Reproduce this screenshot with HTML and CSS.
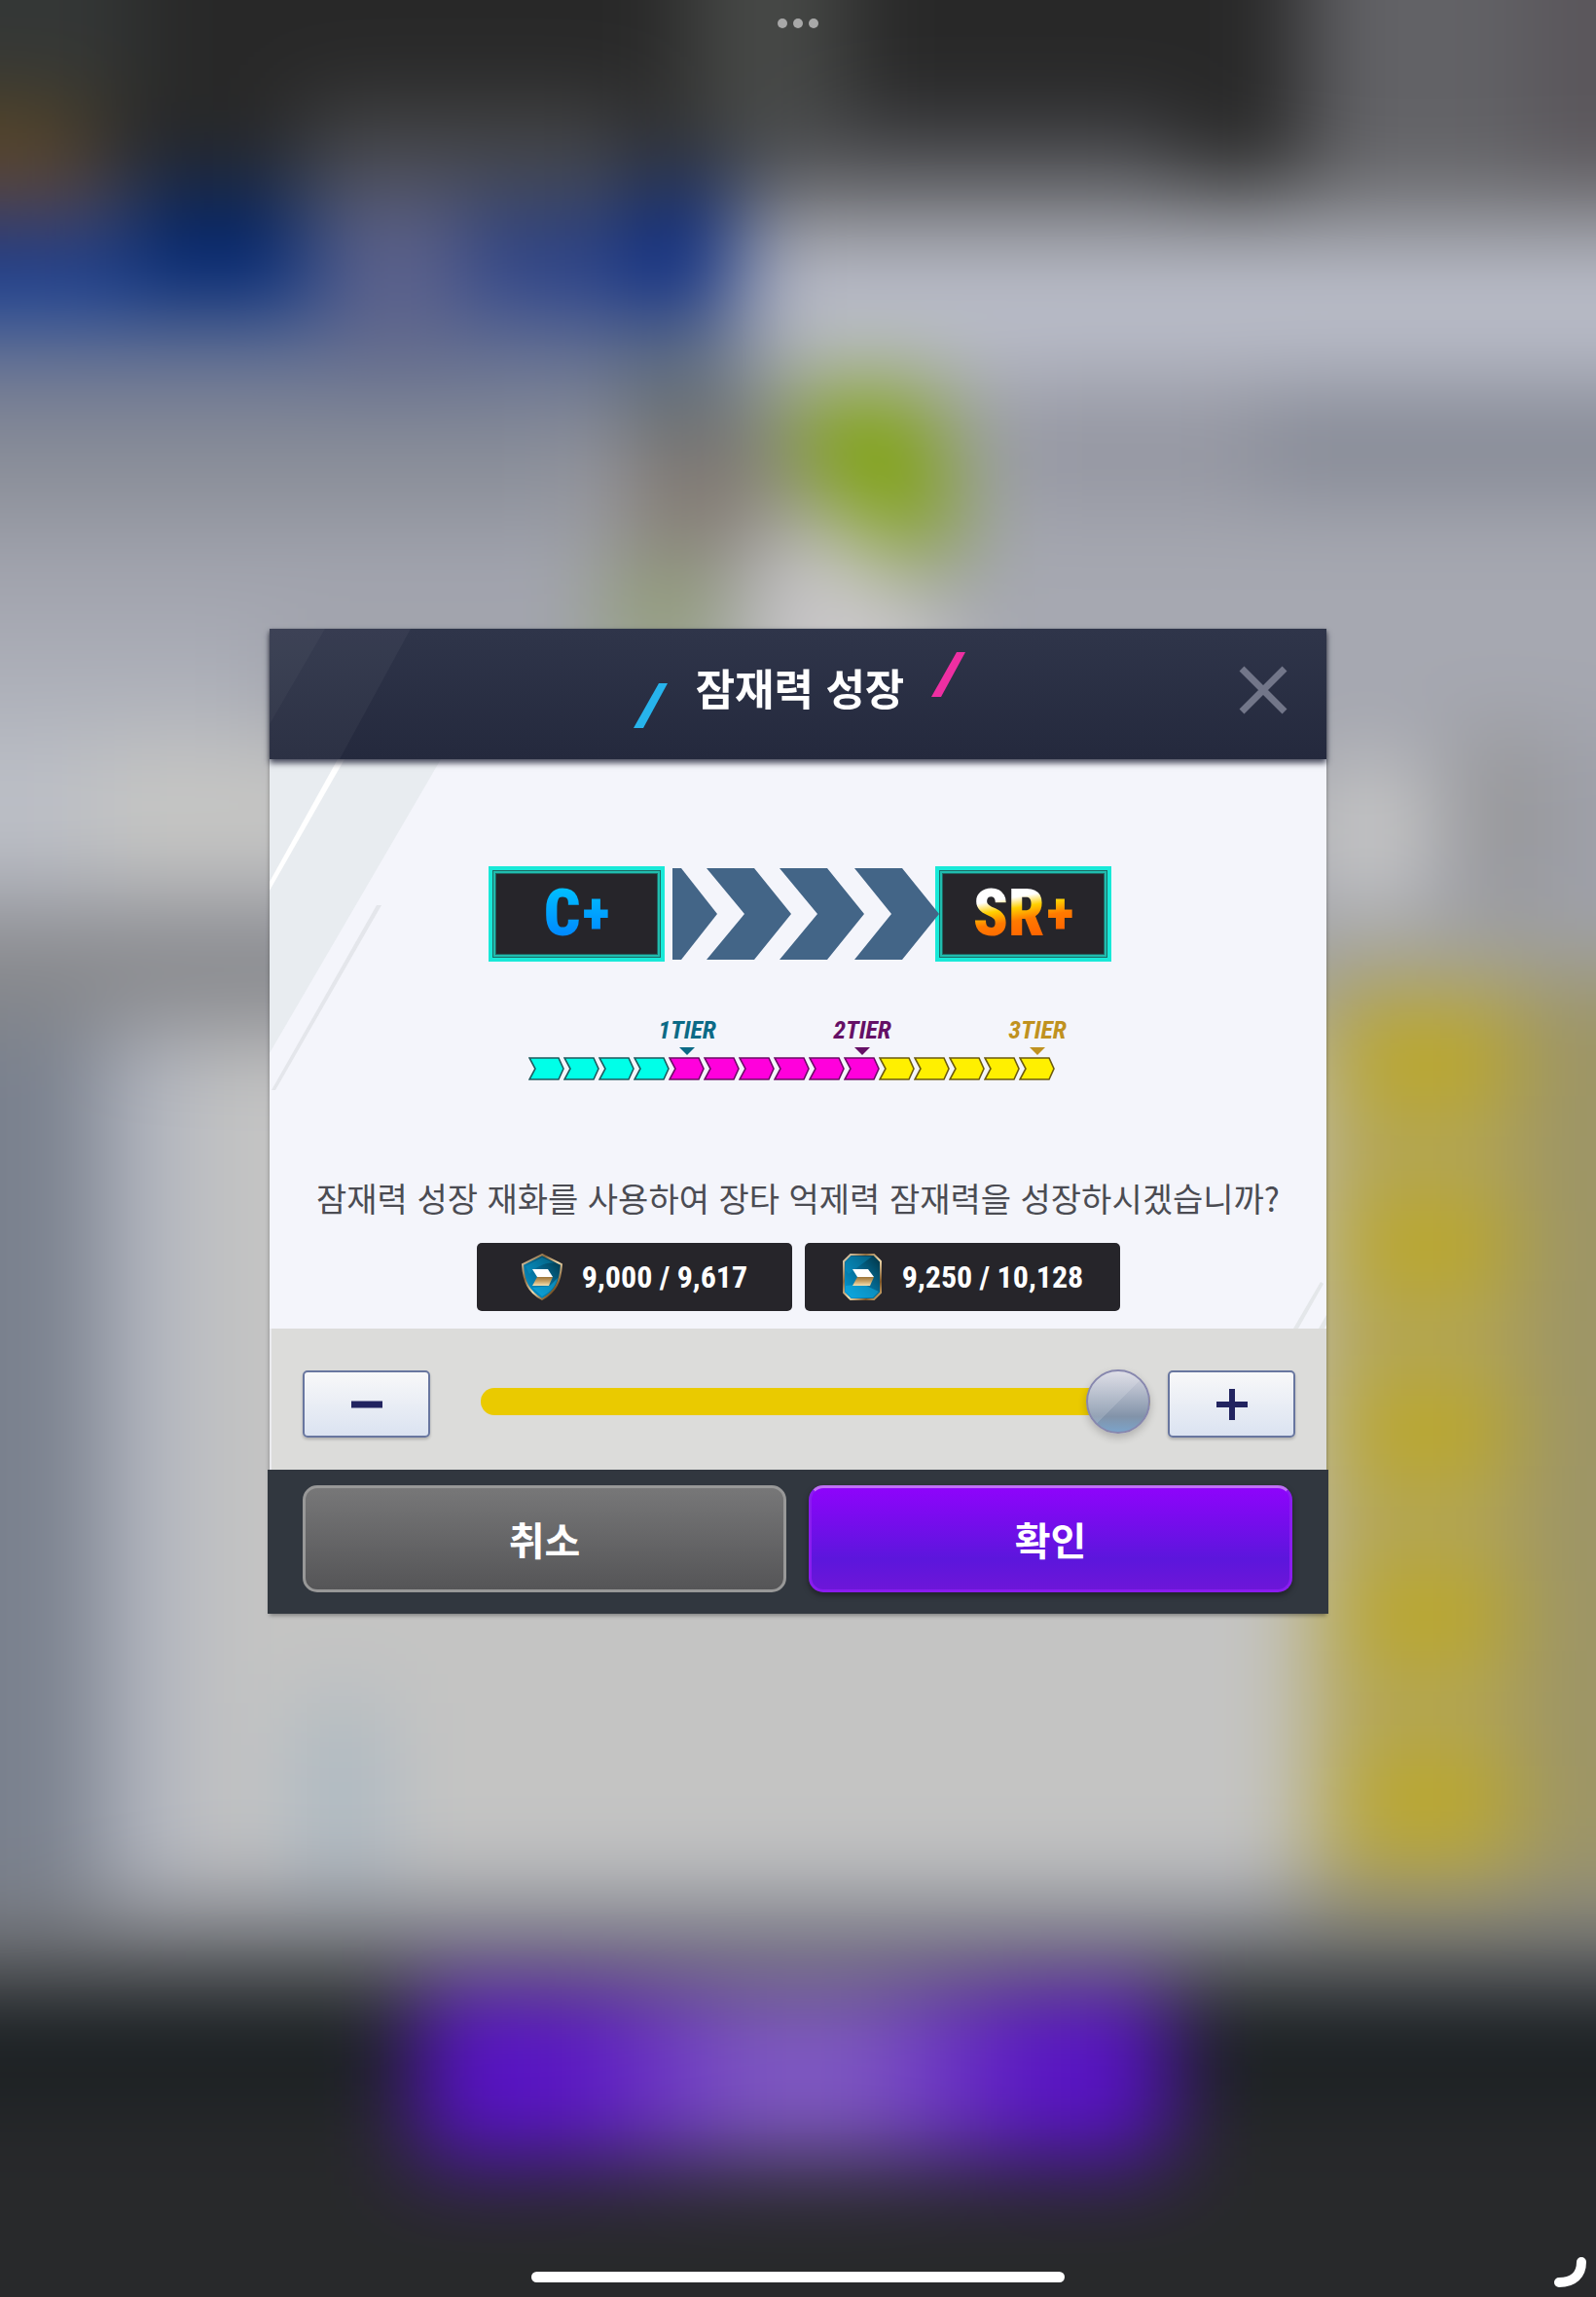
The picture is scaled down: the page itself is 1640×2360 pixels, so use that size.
FILE: index.html
```html
<!DOCTYPE html>
<html lang="ko">

<head>
    <meta charset="UTF-8">
    <meta name="viewport" content="width=device-width, initial-scale=1.0">
    <title>잠재력 성장</title>
    <link rel="stylesheet" href="styles.css">
</head>

<body>
    <!-- blurred game screen behind the dialog -->
    <svg class="backdrop" viewBox="0 0 1640 2360" preserveAspectRatio="none" aria-hidden="true">
        <defs>
            <filter id="soft" filterUnits="userSpaceOnUse" x="-200" y="-200" width="2040" height="2760" color-interpolation-filters="sRGB">
                <feGaussianBlur stdDeviation="46" />
            </filter>
            <linearGradient id="glow" x1="0" y1="0" x2="1" y2="0">
                <stop offset="0" stop-color="#5710c8" />
                <stop offset=".2" stop-color="#5a14c6" />
                <stop offset=".45" stop-color="#8059c4" />
                <stop offset=".58" stop-color="#8059c4" />
                <stop offset=".82" stop-color="#5a14c6" />
                <stop offset="1" stop-color="#5710c8" />
            </linearGradient>
        </defs>
        <g filter="url(#soft)">
            <rect x="-200" y="-200" width="2040" height="2760" fill="#9fa1aa" />
            <rect x="-200" y="-200" width="2040" height="400" fill="#282828" />
            <rect x="-200" y="-200" width="340" height="330" fill="#343736" />
            <rect x="710" y="-200" width="160" height="380" fill="#474947" />
            <rect x="1340" y="-200" width="500" height="440" fill="#626266" />
            <rect x="1570" y="-200" width="270" height="400" fill="#5a565b" />
            <rect x="-200" y="110" width="290" height="80" fill="#5c4822" />
            <rect x="-200" y="190" width="310" height="60" fill="#54415a" />
            <rect x="310" y="110" width="340" height="110" fill="#48494b" />
            <rect x="-200" y="240" width="940" height="95" fill="#123a90" />
            <rect x="130" y="195" width="180" height="110" fill="#04266c" />
            <rect x="330" y="200" width="150" height="180" fill="#5b618b" />
            <rect x="480" y="210" width="160" height="120" fill="#2c4288" />
            <rect x="650" y="190" width="105" height="140" fill="#0a2a80" />
            <rect x="780" y="130" width="430" height="70" fill="#4c4d52" />
            <rect x="800" y="190" width="1040" height="50" fill="#7c7d80" />
            <rect x="780" y="240" width="1060" height="150" fill="#b9bcc8" />
            <rect x="-200" y="350" width="860" height="70" fill="#68728f" />
            <rect x="-200" y="420" width="800" height="120" fill="#8b8f99" />
            <rect x="-200" y="540" width="820" height="120" fill="#a3a5af" />
            <rect x="1040" y="390" width="250" height="130" fill="#9597a2" />
            <rect x="1290" y="400" width="550" height="110" fill="#868a96" />
            <rect x="1000" y="530" width="840" height="220" fill="#a6a8b1" />
            <rect x="640" y="360" width="130" height="90" fill="#586670" />
            <rect x="640" y="440" width="160" height="130" fill="#827a72" />
            <path d="M820 400H960L980 540V570H920L820 490Z" fill="#80a40c" />
            <rect x="620" y="580" width="120" height="100" fill="#939f75" />
            <path d="M780 540H870L980 640V860H760Z" fill="#c9c7c8" />
            <rect x="-200" y="660" width="480" height="130" fill="#aeb1ba" />
            <rect x="-200" y="760" width="300" height="150" fill="#bcbfc6" />
            <rect x="100" y="760" width="260" height="150" fill="#c6c6c4" />
            <rect x="-200" y="950" width="560" height="100" fill="#88898c" />
            <rect x="-200" y="1050" width="300" height="950" fill="#7a818e" />
            <rect x="110" y="1070" width="90" height="900" fill="#b2b6c0" />
            <rect x="200" y="1070" width="1150" height="860" fill="#c4c4c3" />
            <rect x="310" y="1750" width="80" height="200" fill="#a9b7c2" />
            <rect x="1340" y="780" width="130" height="150" fill="#c6c6c6" />
            <rect x="1500" y="750" width="90" height="190" fill="#979799" />
            <rect x="1350" y="1000" width="210" height="950" fill="#b2a558" />
            <rect x="1390" y="1050" width="160" height="80" fill="#bda820" />
            <rect x="1390" y="1240" width="160" height="80" fill="#bda820" />
            <rect x="1390" y="1430" width="160" height="80" fill="#bda820" />
            <rect x="1390" y="1620" width="160" height="80" fill="#bda820" />
            <rect x="1390" y="1810" width="160" height="80" fill="#bda820" />
            <rect x="1560" y="1000" width="280" height="950" fill="#9d9567" />
            <rect x="210" y="1930" width="1110" height="60" fill="#b0b4bf" />
            <rect x="-200" y="1960" width="2040" height="80" fill="#77787c" />
            <rect x="-200" y="2035" width="2040" height="155" fill="#1a1f22" />
            <rect x="-200" y="2160" width="2040" height="400" fill="#28292b" />
            <rect x="430" y="2045" width="770" height="175" fill="url(#glow)" />
        </g>
    </svg>

    <div class="dots" aria-hidden="true"><i></i><i></i><i></i></div>

    <main class="dialog" role="dialog" aria-labelledby="title">
        <header class="head">
            <svg class="head-deco" width="160" height="134" viewBox="0 0 160 134" aria-hidden="true">
                <path d="M0 0H145L72 134H0Z" fill="#fff" fill-opacity=".04" />
                <path d="M0 0H57L0 98Z" fill="#fff" fill-opacity=".03" />
            </svg>
            <svg class="slash low" width="36" height="46" viewBox="0 0 36 46" aria-hidden="true">
                <path d="M26 0H35L10 46H0Z" fill="#27b4ec" />
            </svg>
            <h1 id="title">잠재력 성장</h1>
            <svg class="slash high" width="36" height="46" viewBox="0 0 36 46" aria-hidden="true">
                <path d="M26 0H35L10 46H0Z" fill="#ee2fa2" />
            </svg>
            <button class="close" type="button" aria-label="닫기">
                <svg width="50" height="50" viewBox="0 0 50 50" aria-hidden="true">
                    <path d="M3 3L47 47M47 3L3 47" stroke="#727689" stroke-width="7" />
                </svg>
            </button>
        </header>

        <section class="content">
            <svg class="deco-left" width="180" height="340" viewBox="0 0 180 340" aria-hidden="true">
                <path d="M0 0H176L0 302Z" fill="#e8ecf0" />
                <path d="M70 0H77L0 135V126Z" fill="#fff" />
                <path d="M110 150H115L6 340H2Z" fill="#e4e6eb" />
            </svg>
            <svg class="deco-right" width="34" height="48" viewBox="0 0 34 48" aria-hidden="true">
                <path d="M28 0L31 2L5 48H0Z M34 34V44L32 48H26Z" fill="#e4e7ea" />
            </svg>

            <div class="grades">
                <div class="grade blue"><span>C<b>+</b></span></div>
                <svg class="arrows" width="274" height="94" viewBox="0 0 274 94" fill="#436587" aria-hidden="true">
                    <path d="M0 0H9L46 47L9 94H0Z" />
                    <path d="M35 0H84L122 47L84 94H35L74 47Z" />
                    <path d="M110 0H159L197 47L159 94H110L149 47Z" />
                    <path d="M187 0H236L274 47L236 94H187L225 47Z" />
                </svg>
                <div class="grade gold"><span>SR<b>+</b></span></div>
            </div>

            <svg width="0" height="0" class="defs" aria-hidden="true">
                <symbol id="step" viewBox="0 0 38 24">
                    <path d="M1 1H31L36 12L31 23H1L7 12Z" stroke-width="1.6" />
                </symbol>
            </svg>
            <ol class="tiers">
                <li class="cyan"><svg><use href="#step" /></svg></li>
                <li class="cyan"><svg><use href="#step" /></svg></li>
                <li class="cyan"><svg><use href="#step" /></svg></li>
                <li class="cyan"><svg><use href="#step" /></svg></li>
                <li class="pink"><span class="tier t1">1TIER</span><svg><use href="#step" /></svg></li>
                <li class="pink"><svg><use href="#step" /></svg></li>
                <li class="pink"><svg><use href="#step" /></svg></li>
                <li class="pink"><svg><use href="#step" /></svg></li>
                <li class="pink"><svg><use href="#step" /></svg></li>
                <li class="pink"><span class="tier t2">2TIER</span><svg><use href="#step" /></svg></li>
                <li class="yellow"><svg><use href="#step" /></svg></li>
                <li class="yellow"><svg><use href="#step" /></svg></li>
                <li class="yellow"><svg><use href="#step" /></svg></li>
                <li class="yellow"><svg><use href="#step" /></svg></li>
                <li class="yellow"><span class="tier t3">3TIER</span><svg><use href="#step" /></svg></li>
            </ol>

            <p class="question">잠재력 성장 재화를 사용하여 장타 억제력 잠재력을 성장하시겠습니까?</p>

            <div class="costs">
                <div class="cost">
                    <svg width="44" height="50" viewBox="0 0 44 50" aria-hidden="true">
                        <defs>
                            <linearGradient id="rim" x1="0" y1="0" x2="1" y2="1">
                                <stop offset="0" stop-color="#e9dcc0" />
                                <stop offset=".3" stop-color="#8d6a3d" />
                                <stop offset=".55" stop-color="#f0dcb0" />
                                <stop offset=".8" stop-color="#7a5426" />
                                <stop offset="1" stop-color="#e0bd80" />
                            </linearGradient>
                            <linearGradient id="gem" x1="1" y1="0" x2="0" y2="1">
                                <stop offset="0" stop-color="#01303f" />
                                <stop offset=".45" stop-color="#04678f" />
                                <stop offset="1" stop-color="#04a2e0" />
                            </linearGradient>
                            <linearGradient id="fold" x1="0" y1="0" x2="0" y2="1">
                                <stop offset="0" stop-color="#9b7338" />
                                <stop offset=".5" stop-color="#c9a468" />
                                <stop offset="1" stop-color="#f3dfb0" />
                            </linearGradient>
                        </defs>
                        <path d="M22 2L42 12C41 30 36 40 22 48C8 40 3 30 2 12Z" fill="url(#gem)" stroke="url(#rim)" stroke-width="2" />
                        <path d="M22 5L5 14L9 22C16 14 28 9 36 11Z" fill="#0ba0d2" fill-opacity=".35" />
                        <path d="M30 34L38 26C36 35 31 40 22 45L12 36Z" fill="#13b4ea" fill-opacity=".5" />
                        <path d="M12 17H28L33 25H17Z" fill="#fff" />
                        <path d="M17 25H33L29 34H12Z" fill="url(#fold)" />
                    </svg>
                    <span>9,000 / 9,617</span>
                </div>
                <div class="cost">
                    <svg width="44" height="50" viewBox="0 0 44 50" aria-hidden="true">
                        <path d="M10 2H34L41 9V41L34 48H10L3 41V9Z" fill="url(#gem)" stroke="url(#rim)" stroke-width="2" />
                        <path d="M10 4H32L8 22L5 18V10Z" fill="#0b9ccd" fill-opacity=".35" />
                        <path d="M5 34L22 32L39 40L33 46H11L5 40Z" fill="#13b4ea" fill-opacity=".5" />
                        <path d="M12 17H28L34 25H17Z" fill="#fff" />
                        <path d="M17 25H34L30 34H12Z" fill="url(#fold)" />
                    </svg>
                    <span>9,250 / 10,128</span>
                </div>
            </div>
        </section>

        <section class="amount">
            <button class="step" type="button" id="minus" aria-label="감소">
                <svg width="34" height="34" viewBox="0 0 34 34" aria-hidden="true"><path d="M1 17H33" stroke="#222460" stroke-width="7" /></svg>
            </button>
            <input class="range" id="range" type="range" min="0" max="14" value="14" aria-label="성장 단계">
            <button class="step" type="button" id="plus" aria-label="증가">
                <svg width="34" height="34" viewBox="0 0 34 34" aria-hidden="true"><path d="M1 17H33M17 1V33" stroke="#222460" stroke-width="6" /></svg>
            </button>
        </section>

        <footer class="foot">
            <button class="btn cancel" type="button">취소</button>
            <button class="btn ok" type="button">확인</button>
        </footer>
    </main>

    <div class="home" aria-hidden="true"></div>
    <svg class="corner" width="40" height="40" viewBox="0 0 40 40" aria-hidden="true">
        <path d="M25 4C25 17 17 25 2 25" fill="none" stroke="#fff" stroke-width="10" stroke-linecap="round" />
    </svg>

    <script>
        const range = document.getElementById('range');

        document.getElementById('minus').addEventListener('click', function () {
            range.stepDown();
        });

        document.getElementById('plus').addEventListener('click', function () {
            range.stepUp();
        });
    </script>
</body>

</html>
```
FILE: styles.css
```css
* {
    margin: 0;
    padding: 0;
    box-sizing: border-box;
}

body {
    min-height: 100vh;
    background-color: #28292b;
    display: flex;
    justify-content: center;
    align-items: center;
    padding: 40px 20px 96px;
    font-family: "Noto Sans CJK KR", "Noto Sans", sans-serif;
}

button {
    border: none;
    outline: none;
    cursor: pointer;
    font-family: inherit;
}

.backdrop {
    position: fixed;
    inset: 0;
    width: 100%;
    height: 100%;
    z-index: -1;
}

/* system chrome */
.dots {
    position: fixed;
    top: 19px;
    left: 0;
    right: 0;
    display: flex;
    justify-content: center;
    gap: 6px;
}

.dots i {
    width: 10px;
    height: 10px;
    border-radius: 50%;
    background-color: #a8a8a8;
}

.home {
    position: fixed;
    bottom: 15px;
    left: 33.3%;
    right: 33.3%;
    height: 11px;
    border-radius: 6px;
    background-color: #ffffff;
}

.corner {
    position: fixed;
    right: 0;
    bottom: 0;
    overflow: visible;
}

/* dialog */
.dialog {
    width: 100%;
    max-width: 1086px;
    box-shadow: 0 2px 4px rgba(0, 0, 0, 0.35);
}

.head {
    position: relative;
    z-index: 1;
    height: 134px;
    display: flex;
    justify-content: center;
    align-items: center;
    gap: 28px;
    padding: 0 0 14px 4px;
    background: linear-gradient(#2f354a, #24293d);
    box-shadow: 0 4px 6px rgba(30, 34, 54, 0.8);
}

.head h1 {
    color: #ffffff;
    font-size: 44px;
    font-weight: 700;
    line-height: 56px;
}

.head-deco {
    position: absolute;
    left: 0;
    top: 0;
}

.slash.low {
    margin-top: 38px;
}

.slash.high {
    margin-bottom: 26px;
}

.close {
    position: absolute;
    right: 40px;
    top: 38px;
    width: 50px;
    height: 50px;
    background: none;
}

.content {
    position: relative;
    display: flex;
    flex-direction: column;
    align-items: center;
    padding: 110px 20px 18px;
    background-color: #f4f5fb;
}

.deco-left {
    position: absolute;
    left: 0;
    top: 0;
}

.deco-right {
    position: absolute;
    right: 0;
    bottom: 0;
}

.defs {
    position: absolute;
}

.grades {
    position: relative;
    display: flex;
    align-items: center;
    padding-left: 4px;
}

.grade {
    width: 181px;
    height: 98px;
    display: flex;
    justify-content: center;
    align-items: center;
    border: 4px solid #18e9d8;
    background-color: #26252a;
    box-shadow: inset 0 0 0 1px #1c6b66, inset 0 0 0 3px #20bcae, inset 0 0 0 4px #1f6762;
}

.grade span {
    display: flex;
    align-items: center;
    gap: 2px;
    font-family: "Roboto Condensed", "Liberation Sans Narrow", Roboto, sans-serif;
    font-size: 66px;
    font-weight: 900;
    line-height: 76px;
    color: transparent;
    background-clip: text;
    -webkit-background-clip: text;
}

.grade b {
    font-size: 60px;
}

.blue span {
    background-image: linear-gradient(#00bfff 15%, #0084ff 85%);
}

.gold span {
    background-image: linear-gradient(170deg, #ffffff 30%, #ffd000 42%, #ff7a00 56%, #ff5a00 85%);
}

.arrows {
    position: relative;
    margin: 0 -4px 0 8px;
}

.tiers {
    display: flex;
    align-items: flex-end;
    list-style: none;
    margin-top: 56px;
    padding-right: 12px;
}

.tiers li {
    width: 36px;
    display: flex;
    flex-direction: column;
    align-items: center;
}

.tiers svg {
    width: 38px;
    height: 24px;
}

.cyan {
    fill: #00ffe8;
    stroke: #1f5a5e;
}

.pink {
    fill: #ff00dc;
    stroke: #6c0c66;
}

.yellow {
    fill: #fff000;
    stroke: #6b5a10;
}

.tier {
    font-family: "Roboto Condensed", "Liberation Sans Narrow", Roboto, sans-serif;
    font-size: 26px;
    font-style: italic;
    font-weight: 700;
    line-height: 28px;
}

.tier::after {
    content: "";
    display: block;
    width: 16px;
    height: 8px;
    margin: 4px auto 2px;
    background-color: currentColor;
    clip-path: polygon(0 0, 100% 0, 50% 100%);
}

.t1 {
    color: #0c6a86;
}

.t2 {
    color: #651066;
}

.t3 {
    color: #c09220;
}

.question {
    margin-top: 94px;
    color: #4b4c53;
    font-size: 34px;
    line-height: 54px;
    text-align: center;
}

.costs {
    display: flex;
    gap: 13px;
    margin-top: 19px;
}

.cost {
    width: 324px;
    height: 70px;
    display: flex;
    justify-content: center;
    align-items: center;
    gap: 19px;
    border-radius: 5px;
    background-color: #26252a;
    color: #ffffff;
    font-family: "Roboto Condensed", "Liberation Sans Narrow", Roboto, sans-serif;
    font-size: 32px;
    font-weight: 700;
}

.amount {
    display: flex;
    align-items: center;
    height: 145px;
    padding: 10px 32px 0 32px;
    border-left: 2px solid #ececf0;
    background-color: #dcdcda;
}

.step {
    width: 131px;
    height: 69px;
    display: flex;
    justify-content: center;
    align-items: center;
    border: 2px solid #68769f;
    border-radius: 5px;
    background: linear-gradient(#f8f8f9, #dbe3f1);
    box-shadow: 0 2px 3px rgba(0, 0, 0, 0.2);
}

.range {
    flex: 1;
    min-width: 0;
    height: 66px;
    margin: 0 18px 6px 52px;
    appearance: none;
    -webkit-appearance: none;
    background: none;
    outline: none;
}

.range::-webkit-slider-runnable-track {
    height: 28px;
    border-radius: 14px;
    background-color: #eaca00;
}

.range::-webkit-slider-thumb {
    -webkit-appearance: none;
    width: 66px;
    height: 66px;
    margin-top: -19px;
    border: 2px solid #8787ae;
    border-radius: 50%;
    background: linear-gradient(135deg, rgba(255, 255, 255, 0.15) 50%, transparent 50%), linear-gradient(#d9d9e3, #8293a9 75%, #7ba3c9);
    box-shadow: 0 4px 8px rgba(0, 0, 0, 0.2);
}

.foot {
    display: flex;
    gap: 23px;
    margin: 0 -2px;
    padding: 16px 37px 22px 36px;
    background-color: #31373f;
}

.btn {
    flex: 1;
    height: 110px;
    border-radius: 15px;
    color: #ffffff;
    font-size: 40px;
    font-weight: 700;
}

.cancel {
    border: 3px solid #989898;
    background: linear-gradient(#777778, #555557);
}

.ok {
    border: 3px solid #8a1cf0;
    border-top-color: #c070f6;
    background: linear-gradient(#8e04fb, #5c16dc 70%, #6d16d8);
    box-shadow: 0 3px 6px rgba(0, 0, 0, 0.4);
}
```
